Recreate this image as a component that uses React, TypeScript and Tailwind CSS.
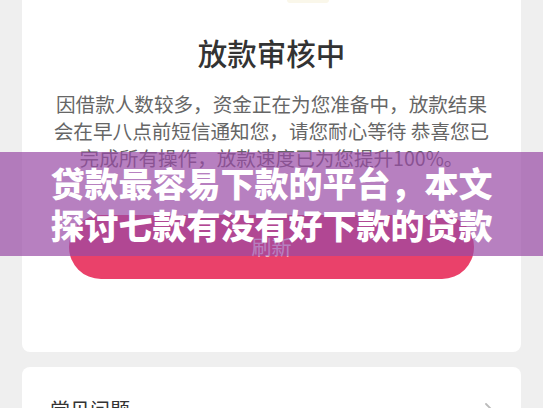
const cjk = { fontFamily: '"Noto Sans CJK SC", "Noto Sans", sans-serif' };

export default function App() {
  return (
    <div className="relative h-[408px] w-[543px] overflow-hidden bg-[#efefef]" style={cjk}>
      <div className="mx-[22px] flex flex-col items-center rounded-b-[8px] bg-white pb-[73px]">
        {/* bottom edge of the illustration above */}
        <div className="h-[3px] w-[42px] translate-x-[36px] rounded-b-full bg-[#faf7ea]" />
        <h1 className="mt-[29px] text-[29.5px] leading-[40px] font-medium text-[#333]">放款审核中</h1>
        <div className="mt-[17.5px] flex flex-col items-center text-[19.6px] leading-[27px] text-[#666] whitespace-nowrap">
          <span>因借款人数较多，资金正在为您准备中，放款结果</span>
          <span>会在早八点前短信通知您，请您耐心等待 恭喜您已</span>
          <span>完成所有操作，放款速度已为您提升100%。</span>
        </div>
        <button className="mt-[44.5px] flex h-[64px] w-[405px] items-center justify-center rounded-full bg-[#ea416a] text-[20px] text-white">
          刷新
        </button>
      </div>

      <div className="mx-[22px] mt-[15px] rounded-t-[8px] bg-white px-[28px] pt-[29px] pb-6">
        <div className="flex items-center justify-between">
          <span className="text-[20px] leading-[28px] text-[#333]">常见问题</span>
          <svg width="10" height="16" viewBox="0 0 10 16" className="mr-[-1px]">
            <path d="M2 2l6 6-6 6" fill="none" stroke="#bbb" strokeWidth="1.8" strokeLinecap="round" strokeLinejoin="round" />
          </svg>
        </div>
      </div>

      <div className="absolute top-[152px] left-0 flex h-[104px] w-full flex-col items-center justify-center bg-[rgba(152,74,165,0.7)] text-[34px] leading-[42px] font-black text-white">
        <span>贷款最容易下款的平台，本文</span>
        <span>探讨七款有没有好下款的贷款</span>
      </div>
    </div>
  );
}
